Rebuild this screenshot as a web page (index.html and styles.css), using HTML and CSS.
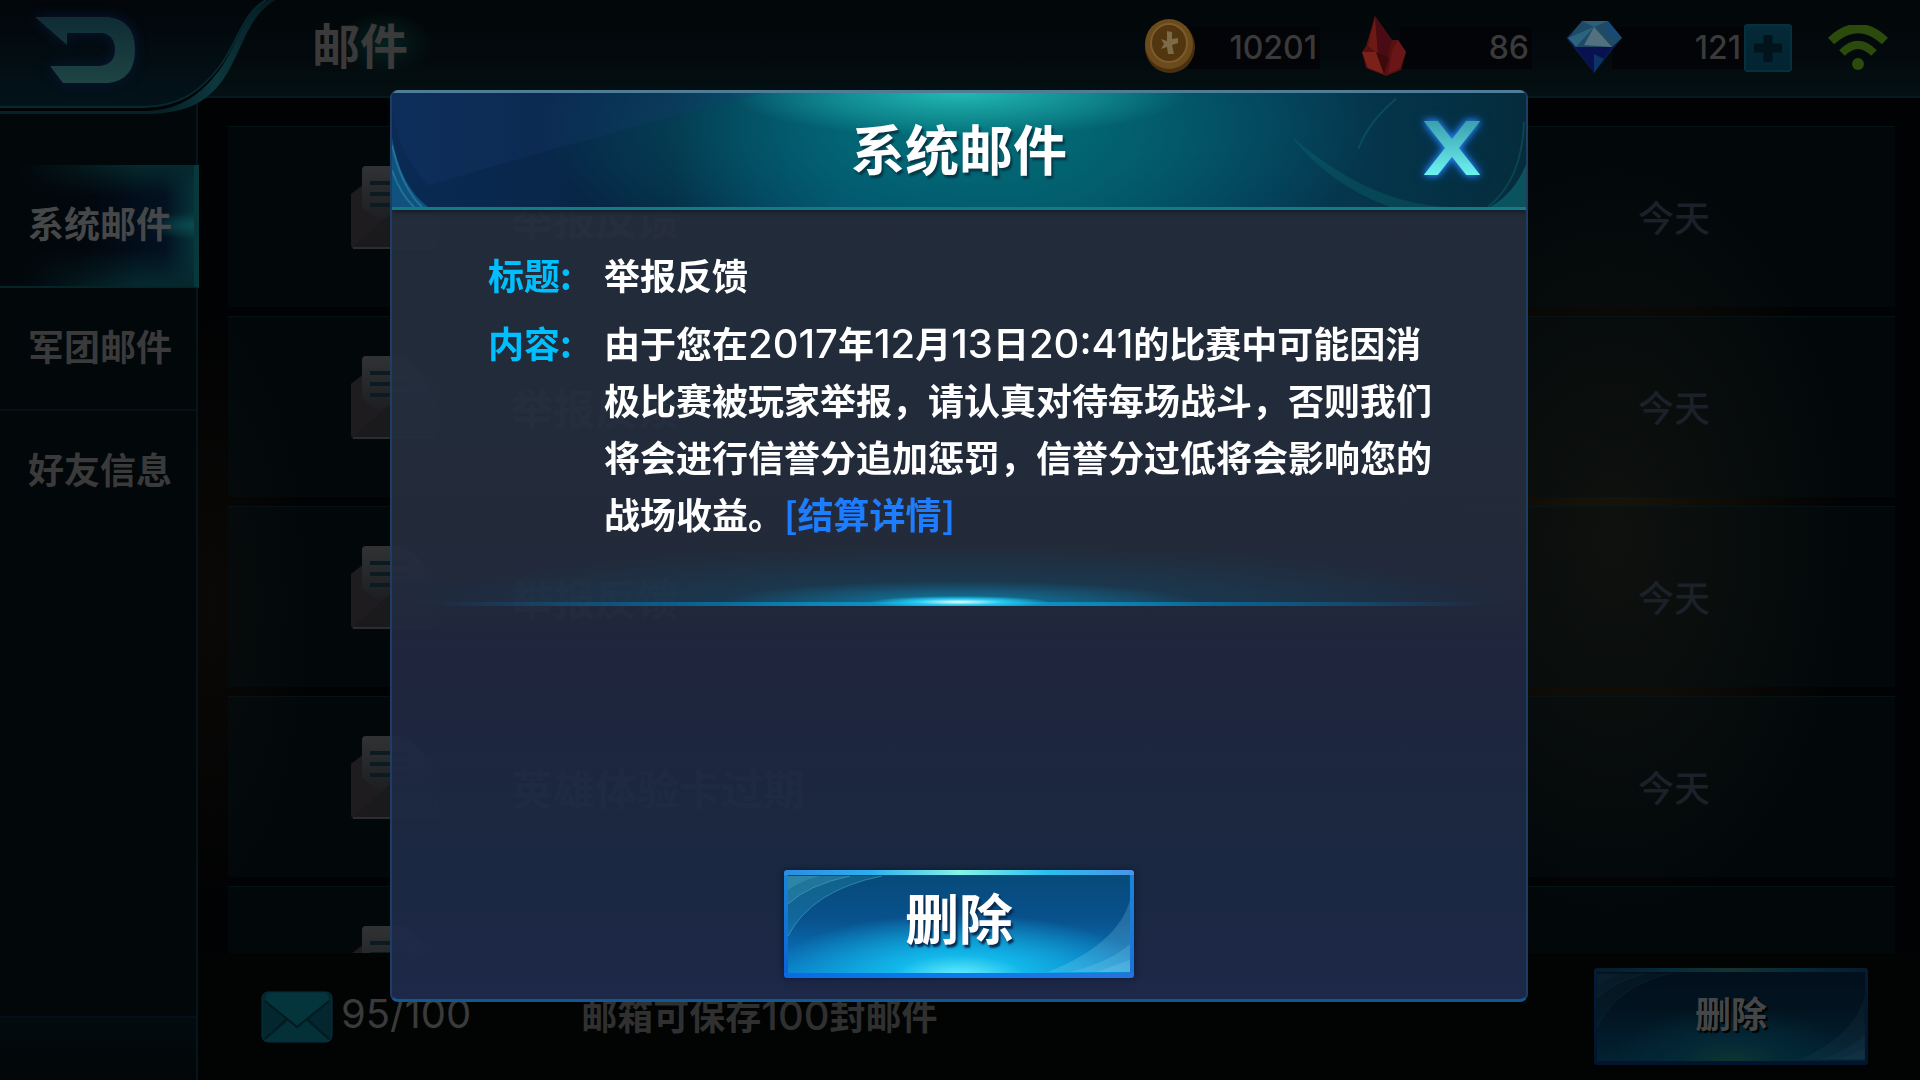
FILE: index.html
```html
<!DOCTYPE html>
<html lang="zh-CN">
<head>
    <meta charset="UTF-8">
    <meta name="viewport" content="width=device-width, initial-scale=1.0">
    <title>邮件</title>
    <link rel="stylesheet" href="styles.css">
</head>
<body>
    <!-- shared shapes -->
    <svg class="defs" width="0" height="0" aria-hidden="true">
        <defs>
            <linearGradient id="paper" x1="0" y1="0" x2="0" y2="1">
                <stop offset="0" stop-color="#303234"/>
                <stop offset="1" stop-color="#1c1d20"/>
            </linearGradient>
        </defs>
        <symbol id="icon-mail-open" viewBox="0 0 88 84">
            <path d="M0 28 L14 17 H74 L87 28 V79 Q87 83 83 83 H4 Q0 83 0 79 Z" fill="#1a191b"/>
            <path d="M11 4 Q11 0 15 0 H50 Q62 4 70 16 L76 28 V42 L46 42 L29 57 L11 42 Z" fill="url(#paper)"/>
            <path d="M0 28 L11 20 V42 L29 57 L2 81 L0 79 Z" fill="#1e1c1e"/>
            <path d="M19 17 H58 M19 28 H58 M19 39 H58" stroke="#0c1a22" stroke-width="4"/>
            <path d="M2 82 H85" stroke="#2e2c33" stroke-width="2"/>
        </symbol>
        <symbol id="button-waves" viewBox="0 0 350 108" preserveAspectRatio="none">
            <path d="M4 6 H98 Q28 20 4 66 Z" fill="#5ff" fill-opacity=".13"/>
            <path d="M4 6 H66 Q24 15 4 34 Z" fill="#8ff" fill-opacity=".12"/>
            <path d="M4 6 H36 Q16 11 4 20 Z" fill="#8ff" fill-opacity=".12"/>
            <path d="M98 6 Q28 20 4 66 M66 6 Q24 15 4 34" fill="none" stroke="#9ff" stroke-opacity=".25"/>
            <path d="M346 30 Q334 74 264 102 H346 Z" fill="#aef" fill-opacity=".18"/>
            <path d="M346 74 Q326 92 286 102 H346 Z" fill="#aef" fill-opacity=".16"/>
            <path d="M346 90 L312 102 H346 Z" fill="#aef" fill-opacity=".16"/>
        </symbol>
    </svg>

    <div class="screen">
        <header class="topbar">
            <button type="button" class="back-button" aria-label="返回">
                <svg width="280" height="116" viewBox="0 0 280 116">
                    <defs>
                        <linearGradient id="rim" x1="0" y1="0" x2="1" y2="0">
                            <stop offset="0" stop-color="#06202c"/>
                            <stop offset=".6" stop-color="#062228"/>
                            <stop offset=".78" stop-color="#0b383e"/>
                            <stop offset="1" stop-color="#04181c"/>
                        </linearGradient>
                        <linearGradient id="arrow" x1="0" y1="0" x2="0" y2="1">
                            <stop offset="0" stop-color="#0f2c34"/>
                            <stop offset="1" stop-color="#1e4444"/>
                        </linearGradient>
                        <linearGradient id="corner" x1="0" y1="0" x2="0" y2="1">
                            <stop offset="0" stop-color="#02060a"/>
                            <stop offset="1" stop-color="#03131a"/>
                        </linearGradient>
                    </defs>
                    <path d="M0 0 H276 C250 14 244 44 228 72 C210 102 188 113 148 114 H0 Z" fill="url(#rim)"/>
                    <path d="M0 0 H268 C244 12 238 44 221 68 C200 96 180 109 148 111 H0 Z" fill="#010406"/>
                    <path d="M0 0 H266 C242 14 238 42 220 66 C200 92 180 106 144 107 H0 Z" fill="url(#corner)"/>
                    <path d="M266 0 C242 14 238 42 220 66 C200 92 180 106 144 107 H0" fill="none" stroke="#07282e" stroke-width="2"/>
                    <path class="back-arrow" d="M35 17 H108 Q135 20 135 50 Q135 80 108 83 H63 L50 66 H100 Q115 64 115 50 Q115 36 103 33 H67 V45 Z" fill="url(#arrow)"/>
                </svg>
            </button>
            <h1 class="page-title">邮件</h1>

            <div class="resources">
                <div class="resource">
                    <svg class="resource-icon" width="56" height="60" viewBox="0 0 56 60">
                        <ellipse cx="26" cy="31" rx="25" ry="26" fill="#4a300f"/>
                        <ellipse cx="25" cy="28" rx="24" ry="25" fill="#6b4a1c"/>
                        <ellipse cx="25" cy="27" rx="18" ry="19" fill="#513610" stroke="#7d5c2a" stroke-width="2"/>
                        <path d="M17 23 L23 25 L23 15 L28 16 L28 23 L34 22 L34 27 L28 29 L30 38 L24 38 L23 31 L17 33 L20 28 Z" fill="#7c6a48"/>
                    </svg>
                    <span class="resource-value">10201</span>
                </div>
                <div class="resource">
                    <svg class="resource-icon" width="56" height="60" viewBox="0 0 56 60">
                        <path d="M19 0 L36 24 L42 24 L50 36 L45 54 L30 60 L10 52 L6 36 L10 30 Z" fill="#54110f"/>
                        <path d="M19 0 L22 38 L12 30 Z" fill="#6e1a14"/>
                        <path d="M19 0 L36 24 L30 46 L22 38 Z" fill="#4a0c14"/>
                        <path d="M42 24 L50 36 L44 52 L32 58 L36 34 Z" fill="#6a1518"/>
                        <path d="M6 36 L20 36 L28 58 L12 52 Z" fill="#7a211a"/>
                        <path d="M20 36 L28 58 L33 42 Z" fill="#3e090c"/>
                    </svg>
                    <span class="resource-value">86</span>
                </div>
                <div class="resource resource-wide">
                    <svg class="resource-icon" width="56" height="60" viewBox="0 0 56 60">
                        <path d="M14 5 H40 L54 22 L26 57 L-2 22 Z" fill="#0a1c4a"/>
                        <path d="M14 5 H40 L54 22 L44 31 H8 L0 22 Z" fill="#1f4a66"/>
                        <path d="M14 5 L26 11 L40 5 Z" fill="#2b5f7a"/>
                        <path d="M26 11 L8 31 L0 22 Z" fill="#2c6480"/>
                        <path d="M26 11 L44 31 L16 29 Z" fill="#52707e"/>
                        <path d="M40 5 L54 22 L40 18 Z" fill="#174a78"/>
                        <path d="M8 31 H44 L26 57 Z" fill="#091250"/>
                        <path d="M26 38 L26 57 L36 43 Z" fill="#0c3464"/>
                    </svg>
                    <span class="resource-value">121</span>
                    <button type="button" class="add-button" aria-label="充值">
                        <svg width="48" height="48" viewBox="0 0 48 48"><path d="M24 11 V38 M10 24 H38" stroke="#02131b" stroke-width="9"/></svg>
                    </button>
                </div>
                <svg class="wifi" width="60" height="46" viewBox="0 0 60 46">
                    <path d="M3 16 Q30 -9 57 16" fill="none" stroke="#2c4a0c" stroke-width="9"/>
                    <path d="M14 28 Q30 12 46 28" fill="none" stroke="#2c4a0c" stroke-width="8"/>
                    <circle cx="30" cy="39" r="6" fill="#2c4a0c"/>
                </svg>
            </div>
        </header>

        <div class="content">
            <nav class="sidebar">
                <a href="#system" class="tab active">系统邮件</a>
                <a href="#legion" class="tab">军团邮件</a>
                <a href="#friends" class="tab">好友信息</a>
                <div class="sidebar-foot"></div>
            </nav>

            <main class="mailbox">
                <ul class="mail-list">
                    <li class="mail-row">
                        <svg class="mail-icon" width="88" height="84"><use href="#icon-mail-open"/></svg>
                        <span class="mail-title">举报反馈</span>
                        <span class="mail-date">今天</span>
                    </li>
                    <li class="mail-row">
                        <svg class="mail-icon" width="88" height="84"><use href="#icon-mail-open"/></svg>
                        <span class="mail-title">举报反馈</span>
                        <span class="mail-date">今天</span>
                    </li>
                    <li class="mail-row">
                        <svg class="mail-icon" width="88" height="84"><use href="#icon-mail-open"/></svg>
                        <span class="mail-title">举报反馈</span>
                        <span class="mail-date">今天</span>
                    </li>
                    <li class="mail-row">
                        <svg class="mail-icon" width="88" height="84"><use href="#icon-mail-open"/></svg>
                        <span class="mail-title">英雄体验卡过期</span>
                        <span class="mail-date">今天</span>
                    </li>
                    <li class="mail-row">
                        <svg class="mail-icon" width="88" height="84"><use href="#icon-mail-open"/></svg>
                    </li>
                </ul>

                <footer class="mailbox-foot">
                    <svg class="count-icon" width="72" height="52" viewBox="0 0 72 52">
                        <rect x="1" y="1" width="70" height="50" rx="6" fill="#03262f" stroke="#053440"/>
                        <path d="M3 50 L28 29 L36 36 L44 29 L69 50 Z" fill="#043038"/>
                        <path d="M4 10 L36 36 L68 10 Q68 3 64 2 H8 Q4 3 4 10 Z" fill="#04343c"/>
                        <path d="M4 10 L36 36 L68 10 M4 48 L26 28 M68 48 L46 28" fill="none" stroke="#021a20" stroke-width="2"/>
                    </svg>
                    <span class="count num">95/100</span>
                    <span class="capacity">邮箱可保存<span class="num">100</span>封邮件</span>
                    <button type="button" class="game-button dim">
                        <svg class="waves" aria-hidden="true"><use href="#button-waves"/></svg>
                        <span>删除</span>
                    </button>
                </footer>
            </main>
        </div>
    </div>

    <div class="overlay">
        <section class="modal" role="dialog" aria-labelledby="modal-title">
            <div class="modal-head">
                <svg class="head-art" viewBox="0 0 1136 118" preserveAspectRatio="none" aria-hidden="true">
                    <path d="M0 0 H370 Q150 60 36 96 Q6 60 0 20 Z" fill="#1c3a78" fill-opacity=".22"/>
                    <path d="M0 46 Q8 96 36 118 H0 Z" fill="#1579a8" fill-opacity=".5"/>
                    <path d="M0 54 Q10 98 30 118 M0 80 Q8 104 22 118" fill="none" stroke="#2b93b8" stroke-opacity=".5" stroke-width="2"/>
                    <path d="M900 44 Q980 116 1060 118 H1000 Q940 96 900 44 Z" fill="#0e7a78" fill-opacity=".25"/>
                    <path d="M1136 74 Q1124 104 1100 118 H1136 Z" fill="#0f8088" fill-opacity=".45"/>
                    <path d="M1134 30 Q1132 90 1098 118 M1006 6 Q978 30 968 58" fill="none" stroke="#188c90" stroke-opacity=".25" stroke-width="2"/>
                </svg>
                <h2 id="modal-title">系统邮件</h2>
                <button type="button" class="close-button" aria-label="关闭">
                    <svg width="60" height="54" viewBox="0 0 60 54">
                        <defs>
                            <linearGradient id="cross" gradientUnits="userSpaceOnUse" x1="0" y1="0" x2="0" y2="54">
                                <stop offset="0" stop-color="#3a9fae"/>
                                <stop offset="1" stop-color="#6df2f0"/>
                            </linearGradient>
                        </defs>
                        <path d="M4 -6 L56 60 M56 -6 L4 60" stroke="url(#cross)" stroke-width="11"/>
                    </svg>
                </button>
            </div>
            <div class="modal-body">
                <dl class="letter">
                    <dt>标题:</dt>
                    <dd>举报反馈</dd>
                    <dt>内容:</dt>
                    <dd>由于您在<span class="num">2017</span>年<span class="num">12</span>月<span class="num">13</span>日<span class="num">20:41</span>的比赛中可能因消极比赛被玩家举报，请认真对待每场战斗，否则我们将会进行信誉分追加惩罚，信誉分过低将会影响您的战场收益。<a href="#detail">[结算详情]</a></dd>
                </dl>
                <div class="divider"></div>
                <button type="button" class="game-button">
                    <svg class="waves" aria-hidden="true"><use href="#button-waves"/></svg>
                    <span>删除</span>
                </button>
            </div>
        </section>
    </div>
</body>
</html>
```

FILE: styles.css
```css
/* --- General Setup --- */
:root {
    --bg: #010203;
    --text-dim: #3a3a3b;
    --line-teal: #05191e;
    --label: #00bfff;
    --link: #1e7dff;
    --font-cjk: "Noto Sans CJK SC", sans-serif;
    --font-num: Inter, "Noto Sans CJK SC", sans-serif;
}
* { box-sizing: border-box; }
body {
    margin: 0;
    background: var(--bg);
    color: var(--text-dim);
    font-family: var(--font-cjk);
    font-size: 36px;
    font-weight: 700;
}
h1, h2, ul, dl, dd { margin: 0; padding: 0; }
a { text-decoration: none; }
button {
    border: 0;
    padding: 0;
    background: none;
    color: inherit;
    font: inherit;
    cursor: pointer;
}
svg { display: block; }
.defs { position: absolute; }
.num {
    font-family: var(--font-num);
    font-size: 40px;
    font-weight: 500;
    line-height: 1;
}

.screen {
    height: 100vh;
    display: flex;
    flex-direction: column;
    overflow: hidden;
    background: radial-gradient(ellipse 240px 380px at 84% 50%, #1a150a, transparent),
        radial-gradient(ellipse 100px 300px at 11% 56%, #0b0907, transparent);
}

/* --- Top Bar --- */
.topbar {
    position: relative;
    flex: none;
    height: 98px;
    display: flex;
    align-items: center;
    padding: 0 32px 0 312px;
    background: linear-gradient(#020608, #030a0d 60%, #041013);
    border-bottom: 2px solid var(--line-teal);
}
.back-button {
    position: absolute;
    top: 0;
    left: 0;
    z-index: 1;
}
.back-arrow { filter: drop-shadow(0 0 6px #0a1638); }
.page-title {
    margin-bottom: 10px;
    padding-right: 24px;
    font-size: 48px;
    font-weight: 700;
    line-height: 64px;
    background: radial-gradient(closest-side at 60% 50%, #05201f, transparent);
}
.resources {
    margin-left: auto;
    display: flex;
    align-items: center;
    gap: 36px;
}
.resource {
    width: 176px;
    display: flex;
    align-items: center;
}
.resource-wide { width: 224px; }
.resource-icon {
    flex: none;
    z-index: 1;
    overflow: visible;
    margin-bottom: 4px;
}
.resource-value {
    flex: 1;
    height: 42px;
    margin-left: -12px;
    padding-right: 3px;
    background: #020407;
    font: 500 32px/42px var(--font-num);
    text-align: right;
}
.add-button {
    flex: none;
    border-radius: 4px;
    background: linear-gradient(#052a38, #032331);
    box-shadow: inset 0 0 0 2px #05303e;
}

/* --- Sidebar --- */
.content {
    flex: 1;
    min-height: 0;
    display: flex;
}
.sidebar {
    flex: none;
    width: 198px;
    display: flex;
    flex-direction: column;
    padding-top: 67px;
    background: #020709;
    border-right: 2px solid #04161c;
}
.tab {
    height: 123px;
    padding-left: 28px;
    color: var(--text-dim);
    line-height: 114px;
    border-bottom: 2px solid #03121a;
    white-space: nowrap;
}
.tab:nth-child(3) { border-bottom: 0; }
.tab.active {
    margin-right: -3px;
    color: #464748;
    border-right: 5px solid #06383c;
    border-bottom-color: #042428;
    background: radial-gradient(ellipse 50px 14px at 100% 50%, #0b4a50, transparent),
        linear-gradient(90deg, #02070b 10%, transparent 70%),
        linear-gradient(#05292c, transparent 25%, transparent 70%, #05292f),
        linear-gradient(90deg, #020710 40%, #031120 85%, #063238);
}
.sidebar-foot {
    height: 64px;
    margin-top: auto;
    background: linear-gradient(#030b0e, #020608);
    border-top: 2px solid #03101a;
}

/* --- Mail List --- */
.mailbox {
    flex: 1;
    min-width: 0;
    display: flex;
    flex-direction: column;
    padding-top: 28px;
}
.mail-list {
    flex: 1;
    min-height: 0;
    overflow: hidden;
    list-style: none;
    margin: 0 25px 0 30px;
    display: flex;
    flex-direction: column;
    gap: 9px;
}
.mail-row {
    flex: none;
    height: 181px;
    display: flex;
    align-items: center;
    padding: 0 185px 2px 123px;
    background: rgba(3, 14, 18, .5);
    border-top: 1px solid rgba(6, 26, 32, .5);
}
.mail-icon { margin-bottom: 16px; }
.mail-title {
    margin-left: 72px;
    font-size: 42px;
}
.mail-date {
    margin-left: auto;
    color: #1c2029;
    font-weight: 500;
}
.mailbox-foot {
    flex: none;
    height: 127px;
    display: flex;
    align-items: center;
    padding: 0 52px 0 63px;
    background: #020303;
}
.count {
    margin: 0 0 6px 8px;
    font-weight: 400;
}
.capacity {
    margin: 0 0 6px 110px;
    color: #303031;
}
.mailbox-foot .game-button { margin-left: auto; }

/* --- Game Button --- */
.game-button {
    position: relative;
    width: 350px;
    height: 108px;
    padding-bottom: 14px;
    border-radius: 3px;
    background: linear-gradient(90deg, #2b8ce4, #2bb0ee 25%, #86f4e8 50%, #2bc0f0 75%, #4a94e8) 0 0 / 100% 5px no-repeat,
        linear-gradient(90deg, #0a6ae8, #0b7cf0 50%, #2a70e0) 0 100% / 100% 5px no-repeat,
        linear-gradient(#1a86d8, #0b62d8) 0 0 / 4px 100% no-repeat,
        linear-gradient(#1a86d8, #1b72d8) 100% 0 / 4px 100% no-repeat,
        radial-gradient(ellipse 55% 60% at 50% 100%, #6ff6ff, #12b8ea 35%, transparent),
        linear-gradient(#064a78, #08518c 45%, #0a80cc);
    box-shadow: 0 0 6px #0a1830;
    color: #fff;
    font-size: 54px;
    line-height: 80px;
    text-shadow: 2px 3px 2px #0a2a50;
}
.game-button .waves {
    position: absolute;
    inset: 0;
    width: 100%;
    height: 100%;
}
.game-button span {
    position: relative;
    display: block;
}
.game-button.dim {
    width: 274px;
    height: 97px;
    padding-bottom: 10px;
    background: linear-gradient(90deg, #051c2c, #052a38 25%, #143430 50%, #052a38 75%, #051c2c) 0 0 / 100% 4px no-repeat,
        linear-gradient(#03142c, #03142c) 0 100% / 100% 4px no-repeat,
        linear-gradient(#031c34, #03142c) 0 0 / 3px 100% no-repeat,
        linear-gradient(#031c34, #03142c) 100% 0 / 3px 100% no-repeat,
        radial-gradient(ellipse 45% 60% at 50% 100%, #0f3632, #032836 45%, transparent),
        linear-gradient(#020f1c, #021420 45%, #032234);
    box-shadow: none;
    color: #454647;
    font-size: 36px;
    text-shadow: 2px 2px 1px #000;
}
.game-button.dim .waves { opacity: .2; }

/* --- Modal --- */
.overlay {
    position: fixed;
    inset: 0;
    display: flex;
    justify-content: center;
    align-items: flex-start;
    padding: 90px 26px 0 24px;
}
.modal {
    width: 100%;
    max-width: 1138px;
    min-height: calc(100vh - 168px);
    display: flex;
    flex-direction: column;
    border: 2px solid #1d3d62;
    border-top: 0;
    border-bottom: 3px solid #0f5a96;
    border-radius: 8px;
    overflow: hidden;
    color: #fff;
    background: linear-gradient(rgba(37, 46, 62, .95), rgba(36, 45, 61, .95) 50%, rgba(32, 39, 64, .95) 62%, rgba(28, 42, 68, .95) 85%, rgba(31, 42, 76, .95));
}
.modal-head {
    position: relative;
    height: 120px;
    display: flex;
    align-items: center;
    justify-content: center;
    padding-bottom: 4px;
    border-top: 3px solid #4f7d98;
    border-bottom: 3px solid #107c88;
    background: radial-gradient(ellipse 230px 44px at 50% 0, #22b8b4, transparent),
        radial-gradient(ellipse 420px 160px at 50% 30%, #027078, transparent),
        linear-gradient(90deg, #0b2a54, #052440 25%, #03466a 40%, #034c62 60%, #043c58 75%, #052c3c);
    box-shadow: 0 2px 5px #141a28;
}
.head-art {
    position: absolute;
    inset: 0;
    width: 100%;
    height: 100%;
}
.modal-head h2 {
    position: relative;
    font-size: 54px;
    font-weight: 700;
    line-height: 1;
    text-shadow: 2px 3px 2px #063848;
}
.close-button {
    position: absolute;
    top: 28px;
    right: 44px;
}
.close-button svg {
    overflow: hidden;
    filter: drop-shadow(0 0 3px #2f8fff) drop-shadow(0 0 5px #0b58b0);
}
.modal-body {
    flex: 1;
    display: flex;
    flex-direction: column;
    align-items: center;
    padding: 36px 0 21px;
}
.letter {
    width: 100%;
    display: grid;
    grid-template-columns: 80px 1fr;
    gap: 11px 36px;
    padding: 0 88px 0 96px;
    line-height: 57px;
}
.letter dt {
    color: var(--label);
    white-space: nowrap;
}
.letter a { color: var(--link); }
.divider {
    width: 100%;
    height: 64px;
    background: radial-gradient(ellipse 90px 6px at 50% 60px, #e8ffff, #22c8f0 50%, transparent),
        radial-gradient(ellipse 240px 22px at 50% 61px, rgba(14, 150, 200, .7), transparent),
        linear-gradient(90deg, transparent 4%, #0b5f8c 25%, #0a9fd8 50%, #0b5f8c 75%, transparent 96%) 0 60px / 100% 4px no-repeat,
        radial-gradient(ellipse 50% 60px at 50% 100%, rgba(14, 90, 120, .5), transparent);
}
.modal-body .game-button { margin-top: auto; }
```
